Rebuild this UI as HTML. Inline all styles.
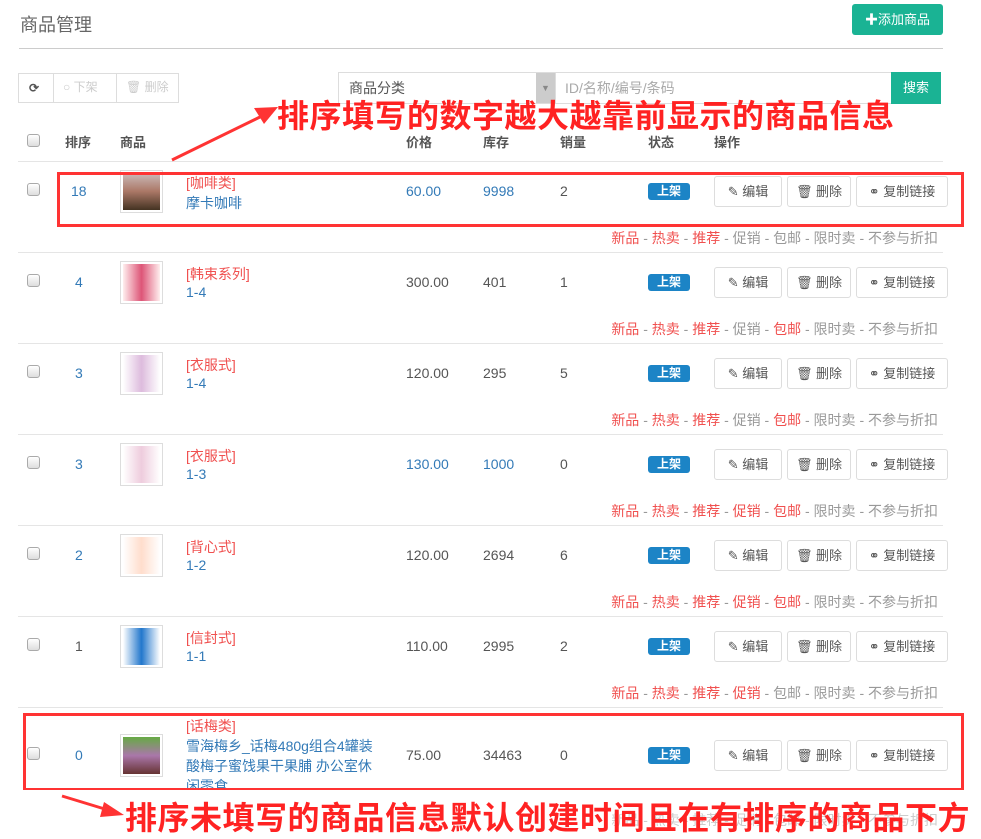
<!DOCTYPE html>
<html><head><meta charset="utf-8"><style>
*{margin:0;padding:0;box-sizing:border-box}
body{width:981px;height:837px;background:#fff;font-family:"Liberation Sans","Noto Sans CJK SC",sans-serif;font-size:14px;color:#555;position:relative;overflow:hidden}
.a{position:absolute;white-space:nowrap}
.cb{position:absolute;width:13px;height:13px;border:1px solid #aaa;border-radius:3px;background:linear-gradient(#fff,#ddd)}
.line{position:absolute;height:1px;background:#e5e5e5;left:18px;width:925px}
.blue{color:#337ab7}
.red{color:#f0504f}
.btn{position:absolute;height:31px;border:1px solid #ddd;border-radius:3px;background:#fff;font-size:13px;color:#555;text-align:center;line-height:29px}
.badge{position:absolute;width:42px;height:17px;background:#1c84c6;color:#fff;border-radius:3px;font-size:12px;font-weight:bold;text-align:center;line-height:17px}
.img{position:absolute;width:43px;height:43px;border:1px solid #ddd;padding:2px}
.tags{position:absolute;right:43px;font-size:14px;color:#999}
.ann{position:absolute;color:#f22;font-weight:bold;font-size:32px;white-space:nowrap;letter-spacing:0.5px}
.box{position:absolute;border:3px solid #f33}
.c{font-size:14px}
</style></head><body>
<div class="a" style="left:20px;top:11px;font-size:18px;color:#666">商品管理</div>
<div class="a" style="left:852px;top:4px;width:91px;height:31px;background:#1ab394;color:#fff;border-radius:3px;font-size:13px;line-height:31px;text-align:center"><b>✚</b>添加商品</div>
<div style="position:absolute;left:19px;top:48px;width:924px;height:1px;background:#ccc"></div>

<div class="a" style="left:18px;top:73px;width:161px;height:30px;border:1px solid #ddd;font-size:12px;color:#ccc;line-height:28px">
<span style="position:absolute;left:10px;color:#555;font-weight:bold">⟳</span>
<span style="position:absolute;left:34px;top:-1px;height:30px;border-left:1px solid #ddd;padding-left:9px">○ 下架</span>
<span style="position:absolute;left:97px;top:-1px;height:30px;border-left:1px solid #ddd;padding-left:9px">🗑 删除</span></div>
<div class="a" style="left:338px;top:72px;width:218px;height:32px;border:1px solid #ddd;font-size:14px;color:#555;line-height:30px;padding-left:10px">商品分类<span style="position:absolute;right:0;top:0;width:19px;height:30px;background:#ccc;color:#888;font-size:9px;text-align:center">▼</span></div>
<div class="a" style="left:556px;top:72px;width:336px;height:32px;border:1px solid #ddd;border-left:0;font-size:14px;color:#aaa;line-height:30px;padding-left:9px">ID/名称/编号/条码</div>
<div class="a" style="left:891px;top:72px;width:50px;height:32px;background:#1ab394;color:#fff;font-size:13px;line-height:32px;text-align:center">搜索</div>

<div class="cb" style="left:27px;top:134px"></div>
<div class="a" style="top:132px;left:65px;font-size:13px;font-weight:bold">排序</div>
<div class="a" style="top:132px;left:120px;font-size:13px;font-weight:bold">商品</div>
<div class="a" style="top:132px;left:406px;font-size:13px;font-weight:bold">价格</div>
<div class="a" style="top:132px;left:483px;font-size:13px;font-weight:bold">库存</div>
<div class="a" style="top:132px;left:560px;font-size:13px;font-weight:bold">销量</div>
<div class="a" style="top:132px;left:648px;font-size:13px;font-weight:bold">状态</div>
<div class="a" style="top:132px;left:714px;font-size:13px;font-weight:bold">操作</div>
<div class="line" style="top:161px"></div>

<!-- row 1 -->
<div class="cb" style="left:27px;top:183px"></div><div class="a blue" style="left:71px;top:183px">18</div>
<div class="img" style="left:120px;top:170px"><div style="width:100%;height:100%;background:linear-gradient(#cbb,#a76,#432)"></div></div>
<div class="a red c" style="left:186px;top:173px">[咖啡类]</div><div class="a blue c" style="left:186px;top:193px">摩卡咖啡</div>
<div class="a blue" style="left:406px;top:183px">60.00</div><div class="a blue" style="left:483px;top:183px">9998</div><div class="a" style="left:560px;top:183px">2</div>
<div class="badge" style="left:648px;top:183px">上架</div>
<div class="btn" style="left:714px;top:176px;width:68px">✎ 编辑</div><div class="btn" style="left:787px;top:176px;width:64px">🗑 删除</div><div class="btn" style="left:856px;top:176px;width:92px">⚭ 复制链接</div>
<div class="tags" style="top:228px"><span class="red">新品</span> - <span class="red">热卖</span> - <span class="red">推荐</span> - 促销 - 包邮 - 限时卖 - 不参与折扣</div>
<div class="line" style="top:252px"></div>

<!-- row 2 -->
<div class="cb" style="left:27px;top:274px"></div><div class="a blue" style="left:75px;top:274px">4</div>
<div class="img" style="left:120px;top:261px"><div style="width:100%;height:100%;background:linear-gradient(90deg,#fee,#d57,#fee)"></div></div>
<div class="a red c" style="left:186px;top:264px">[韩束系列]</div><div class="a blue c" style="left:186px;top:284px">1-4</div>
<div class="a" style="left:406px;top:274px">300.00</div><div class="a" style="left:483px;top:274px">401</div><div class="a" style="left:560px;top:274px">1</div>
<div class="badge" style="left:648px;top:274px">上架</div>
<div class="btn" style="left:714px;top:267px;width:68px">✎ 编辑</div><div class="btn" style="left:787px;top:267px;width:64px">🗑 删除</div><div class="btn" style="left:856px;top:267px;width:92px">⚭ 复制链接</div>
<div class="tags" style="top:319px"><span class="red">新品</span> - <span class="red">热卖</span> - <span class="red">推荐</span> - 促销 - <span class="red">包邮</span> - 限时卖 - 不参与折扣</div>
<div class="line" style="top:343px"></div>

<!-- row 3 -->
<div class="cb" style="left:27px;top:365px"></div><div class="a blue" style="left:75px;top:365px">3</div>
<div class="img" style="left:120px;top:352px"><div style="width:100%;height:100%;background:linear-gradient(90deg,#fff,#dbd,#fff)"></div></div>
<div class="a red c" style="left:186px;top:355px">[衣服式]</div><div class="a blue c" style="left:186px;top:375px">1-4</div>
<div class="a" style="left:406px;top:365px">120.00</div><div class="a" style="left:483px;top:365px">295</div><div class="a" style="left:560px;top:365px">5</div>
<div class="badge" style="left:648px;top:365px">上架</div>
<div class="btn" style="left:714px;top:358px;width:68px">✎ 编辑</div><div class="btn" style="left:787px;top:358px;width:64px">🗑 删除</div><div class="btn" style="left:856px;top:358px;width:92px">⚭ 复制链接</div>
<div class="tags" style="top:410px"><span class="red">新品</span> - <span class="red">热卖</span> - <span class="red">推荐</span> - 促销 - <span class="red">包邮</span> - 限时卖 - 不参与折扣</div>
<div class="line" style="top:434px"></div>

<!-- row 4 -->
<div class="cb" style="left:27px;top:456px"></div><div class="a blue" style="left:75px;top:456px">3</div>
<div class="img" style="left:120px;top:443px"><div style="width:100%;height:100%;background:linear-gradient(90deg,#fff,#ecd,#fff)"></div></div>
<div class="a red c" style="left:186px;top:446px">[衣服式]</div><div class="a blue c" style="left:186px;top:466px">1-3</div>
<div class="a blue" style="left:406px;top:456px">130.00</div><div class="a blue" style="left:483px;top:456px">1000</div><div class="a" style="left:560px;top:456px">0</div>
<div class="badge" style="left:648px;top:456px">上架</div>
<div class="btn" style="left:714px;top:449px;width:68px">✎ 编辑</div><div class="btn" style="left:787px;top:449px;width:64px">🗑 删除</div><div class="btn" style="left:856px;top:449px;width:92px">⚭ 复制链接</div>
<div class="tags" style="top:501px"><span class="red">新品</span> - <span class="red">热卖</span> - <span class="red">推荐</span> - <span class="red">促销</span> - <span class="red">包邮</span> - 限时卖 - 不参与折扣</div>
<div class="line" style="top:525px"></div>

<!-- row 5 -->
<div class="cb" style="left:27px;top:547px"></div><div class="a blue" style="left:75px;top:547px">2</div>
<div class="img" style="left:120px;top:534px"><div style="width:100%;height:100%;background:linear-gradient(90deg,#fff,#fdc,#fff)"></div></div>
<div class="a red c" style="left:186px;top:537px">[背心式]</div><div class="a blue c" style="left:186px;top:557px">1-2</div>
<div class="a" style="left:406px;top:547px">120.00</div><div class="a" style="left:483px;top:547px">2694</div><div class="a" style="left:560px;top:547px">6</div>
<div class="badge" style="left:648px;top:547px">上架</div>
<div class="btn" style="left:714px;top:540px;width:68px">✎ 编辑</div><div class="btn" style="left:787px;top:540px;width:64px">🗑 删除</div><div class="btn" style="left:856px;top:540px;width:92px">⚭ 复制链接</div>
<div class="tags" style="top:592px"><span class="red">新品</span> - <span class="red">热卖</span> - <span class="red">推荐</span> - <span class="red">促销</span> - <span class="red">包邮</span> - 限时卖 - 不参与折扣</div>
<div class="line" style="top:616px"></div>

<!-- row 6 -->
<div class="cb" style="left:27px;top:638px"></div><div class="a" style="left:75px;top:638px">1</div>
<div class="img" style="left:120px;top:625px"><div style="width:100%;height:100%;background:linear-gradient(90deg,#fff,#27c,#fff)"></div></div>
<div class="a red c" style="left:186px;top:628px">[信封式]</div><div class="a blue c" style="left:186px;top:648px">1-1</div>
<div class="a" style="left:406px;top:638px">110.00</div><div class="a" style="left:483px;top:638px">2995</div><div class="a" style="left:560px;top:638px">2</div>
<div class="badge" style="left:648px;top:638px">上架</div>
<div class="btn" style="left:714px;top:631px;width:68px">✎ 编辑</div><div class="btn" style="left:787px;top:631px;width:64px">🗑 删除</div><div class="btn" style="left:856px;top:631px;width:92px">⚭ 复制链接</div>
<div class="tags" style="top:683px"><span class="red">新品</span> - <span class="red">热卖</span> - <span class="red">推荐</span> - <span class="red">促销</span> - 包邮 - 限时卖 - 不参与折扣</div>
<div class="line" style="top:707px"></div>

<!-- row 7 -->
<div class="cb" style="left:27px;top:747px"></div><div class="a blue" style="left:75px;top:747px">0</div>
<div class="img" style="left:120px;top:734px"><div style="width:100%;height:100%;background:linear-gradient(#6a4,#a7a,#633)"></div></div>
<div class="a red c" style="left:186px;top:716px">[话梅类]</div>
<div class="a blue" style="left:186px;top:736px;font-size:14px;line-height:20px;white-space:normal;width:196px">雪海梅乡_话梅480g组合4罐装酸梅子蜜饯果干果脯 办公室休闲零食</div>
<div class="a" style="left:406px;top:747px">75.00</div><div class="a" style="left:483px;top:747px">34463</div><div class="a" style="left:560px;top:747px">0</div>
<div class="badge" style="left:648px;top:747px">上架</div>
<div class="btn" style="left:714px;top:740px;width:68px">✎ 编辑</div><div class="btn" style="left:787px;top:740px;width:64px">🗑 删除</div><div class="btn" style="left:856px;top:740px;width:92px">⚭ 复制链接</div>

<!-- annotations -->
<div class="box" style="left:57px;top:172px;width:907px;height:55px"></div>
<div class="box" style="left:23px;top:713px;width:941px;height:78px;background:transparent"></div>
<div style="position:absolute;left:0;top:790px;width:981px;height:47px;background:#fff"></div>
<div class="tags" style="top:810px;color:#ccc">新品 - 热卖 - 推荐 - 促销 - 包邮 - 限时卖 - 不参与折扣</div>
<div class="ann" style="left:277px;top:91px">排序填写的数字越大越靠前显示的商品信息</div>
<div class="ann" style="left:125px;top:793px">排序未填写的商品信息默认创建时间且在有排序的商品下方</div>
<svg style="position:absolute;left:0;top:0" width="981" height="837">
<line x1="172" y1="160" x2="262" y2="116" stroke="#f33" stroke-width="3"/>
<polygon points="278,107 254,108 264,124" fill="#f33"/>
<line x1="62" y1="796" x2="108" y2="810" stroke="#f33" stroke-width="3"/>
<polygon points="124,815 104,802 100,817" fill="#f33"/>
</svg>
</body></html>
